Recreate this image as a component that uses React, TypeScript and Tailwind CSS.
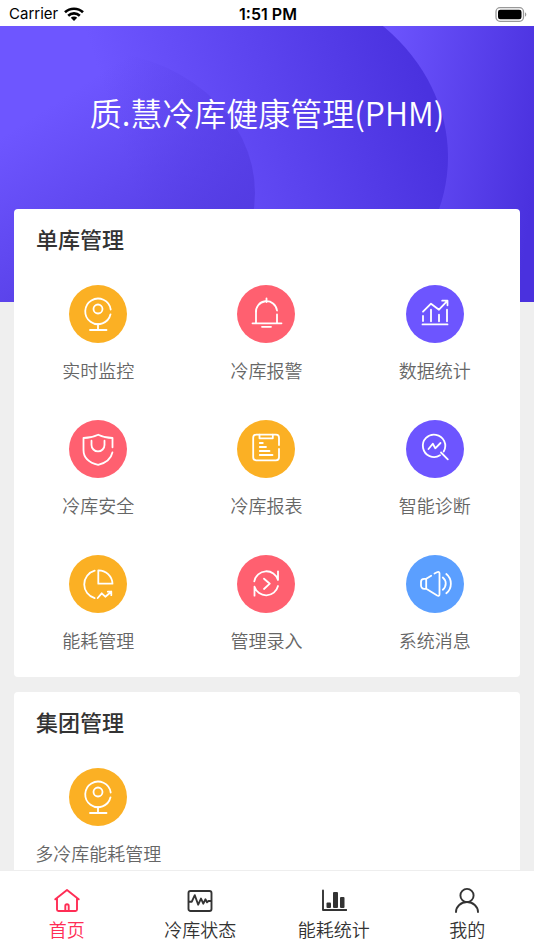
import { useState } from 'react';
import type { ReactNode } from 'react';

type MenuItem = {
  label: string;
  color: string;
  icon: ReactNode;
};

const webcam = (
  <>
    <path d="M41.700 24.500A12.800 12.800 0 1 0 41.500 29.300" />
    <circle cx="29" cy="24" r="4.500" />
    <path d="M29 39v6M21 45h16.500" />
  </>
);

const bell = (
  <>
    <path d="M29.500 13.500v3.500M19 38V28a10.500 10.500 0 0 1 21-2.500M40 29.500V38" />
    <path d="M15.500 38.300h29M25 41.800h9" />
  </>
);

const chart = (
  <>
    <path d="M16.500 39.400h25M17 31v5M25 24.700v11.600M33 29.700v6.600M41 24.700v11.600" />
    <path d="M17 26.700l8-8 8 6 8.300-8.800M36.200 15.700h5.300v4.600" />
  </>
);

const shield = (
  <>
    <path d="M43.500 27.300V18c-5 0-10-1.200-14.300-3.300C24.800 16.800 19.500 18 14.500 18v12c0 8 6 12.800 14.700 14.900C36.500 43 42 39 43.400 32.500" />
    <path d="M22.500 20.700v4.200a6.500 6.500 0 0 0 13 0v-4.200" />
  </>
);

const report = (
  <>
    <path d="M42 25v-7.300a3 3 0 0 0-3-3H19.200a3 3 0 0 0-3 3v19.600a3 3 0 0 0 3 3H39a3 3 0 0 0 3-3V29" />
    <path d="M22.500 14.700v3.600h13.300v-3.600M22.800 23h3M22.800 27h6.200M22.800 31h9.700M22.800 35h12.700" />
  </>
);

const diagnose = (
  <>
    <path d="M37.700 31.500A11.200 11.200 0 1 0 34 35.300" />
    <path d="M35 32.500l6.800 6.800M22.500 29l4.300-5.300 2.500 4.600 5.200-5.300" />
  </>
);

const pie = (
  <>
    <path d="M25.700 15.700a14.200 14.200 0 0 0 0 27.400" />
    <path d="M29.300 15.300v13.400h14.200A14 14 0 0 0 29.300 15.300zM28.700 43l4-4.700 3.600 3.400 6-5M38.800 36.700h3.500v3.500" />
  </>
);

const entry = (
  <>
    <path d="M17.300 26.300A12.200 12.200 0 0 1 41 25v-8.700M41 31a12.200 12.200 0 0 1-23.500.7v9" />
    <path d="M27 23.700l5.800 5L27 34" />
  </>
);

const speaker = (
  <>
    <path d="M20.200 23.800h-2a3.200 3.200 0 0 0-3.200 3.200v3.600a3.200 3.200 0 0 0 3.200 3.200h2zM20.200 23.800l5-3.100M28.500 18.500l2.500-1.300c1.500-.8 2.500 0 2.500 1.300v20.700c0 1.500-1 2-2.300 1.300l-11-6.700" />
    <path d="M36.800 22.500a7.800 7.800 0 0 1 0 12.200M40.300 19a12.500 12.500 0 0 1 0 19.300" />
  </>
);

const singleItems: MenuItem[] = [
  { label: '实时监控', color: 'bg-[#fbb024]', icon: webcam },
  { label: '冷库报警', color: 'bg-[#ff6070]', icon: bell },
  { label: '数据统计', color: 'bg-[#6d55ff]', icon: chart },
  { label: '冷库安全', color: 'bg-[#ff6070]', icon: shield },
  { label: '冷库报表', color: 'bg-[#fbb024]', icon: report },
  { label: '智能诊断', color: 'bg-[#6d55ff]', icon: diagnose },
  { label: '能耗管理', color: 'bg-[#fbb024]', icon: pie },
  { label: '管理录入', color: 'bg-[#ff6070]', icon: entry },
  { label: '系统消息', color: 'bg-[#5b9fff]', icon: speaker },
];

const groupItems: MenuItem[] = [{ label: '多冷库能耗管理', color: 'bg-[#fbb024]', icon: webcam }];

const tabs = [
  {
    label: '首页',
    icon: (
      <>
        <path d="M1.300 12.300L13 3l11.700 9.300M3 11v11.500a1.500 1.500 0 0 0 1.500 1.500h17a1.500 1.500 0 0 0 1.500-1.500V11" />
        <path d="M11.300 24v-5a1.700 1.700 0 0 1 3.400 0v5" />
      </>
    ),
  },
  {
    label: '冷库状态',
    icon: (
      <>
        <rect x="1.500" y="4" width="23" height="20" rx="2" />
        <path d="M2 14.700h2.800l3-6.500 3.400 9.500 2.800-6.100 2.300 5.100 2.100-4.400 1.600 3 1.500-1.300H24" />
      </>
    ),
  },
  {
    label: '能耗统计',
    icon: (
      <>
        <path d="M2 3.500V23h23.500" />
        <g fill="currentColor" stroke="none">
          <rect x="5.500" y="15.500" width="4.500" height="5.500" rx="1" />
          <rect x="12" y="5" width="5" height="16" rx="1" />
          <rect x="19" y="10" width="4.500" height="11" rx="1" />
        </g>
      </>
    ),
  },
  {
    label: '我的',
    icon: (
      <>
        <circle cx="13" cy="8.500" r="6.600" />
        <path d="M2 25a11 10 0 0 1 22 0" />
      </>
    ),
  },
];

function StatusBar() {
  return (
    <div className="grid h-[26px] shrink-0 grid-cols-3 items-center bg-white pt-0.5 pr-[7px] pl-[9px] font-['Inter',sans-serif] text-[15px] leading-6 font-normal text-black">
      <div className="flex items-center gap-1.5">
        <span>Carrier</span>
        <svg className="h-[14px] w-[20px]" viewBox="0 0 20 14" fill="none" stroke="currentColor" strokeWidth="2.600">
          <path d="M1 5.300a13 13 0 0 1 18 0M4.200 8.700a8.400 8.400 0 0 1 11.600 0" />
          <path d="M10 14l-3.200-3.200a4.600 4.600 0 0 1 6.400 0z" fill="currentColor" stroke="none" />
        </svg>
      </div>
      <div className="text-center text-base font-semibold">1:51 PM</div>
      <svg className="h-[15px] w-[32px] justify-self-end" viewBox="0 0 32 15">
        <rect x="1" y="0.700" width="27.500" height="13.600" rx="4" fill="none" stroke="#999" strokeWidth="1.300" />
        <rect x="3" y="2.700" width="23.500" height="9.600" rx="2.300" fill="#000" />
        <path d="M30 5.300c1.800.7 1.800 3.700 0 4.400z" fill="#999" />
      </svg>
    </div>
  );
}

function HeaderBackground() {
  return (
    <svg className="absolute inset-x-0 top-0 h-[276px] w-full" viewBox="0 0 534 276" preserveAspectRatio="none">
      <defs>
        <linearGradient id="base" gradientUnits="userSpaceOnUse" x1="370" y1="60" x2="545" y2="85">
          <stop offset="0" stopColor="#6e56ff" />
          <stop offset="1" stopColor="#4a31de" />
        </linearGradient>
        <linearGradient id="big" gradientUnits="userSpaceOnUse" x1="130" y1="150" x2="425" y2="60">
          <stop offset="0" stopColor="#6e56ff" />
          <stop offset="1" stopColor="#4a32df" />
        </linearGradient>
        <linearGradient id="small" gradientUnits="userSpaceOnUse" x1="80" y1="60" x2="190" y2="230">
          <stop offset="0" stopColor="#533be2" stopOpacity="0" />
          <stop offset="1" stopColor="#533be2" />
        </linearGradient>
      </defs>
      <rect width="534" height="276" fill="url(#base)" />
      <ellipse cx="232" cy="131" rx="216" ry="183" fill="url(#big)" />
      <ellipse cx="88" cy="167" rx="167" ry="142" fill="url(#small)" />
    </svg>
  );
}

function MenuCard({ title, items }: { title: string; items: MenuItem[] }) {
  return (
    <section className="rounded bg-white pb-[23px]">
      <h2 className="px-[22px] pt-3.5 pb-8 text-[22px] leading-[30px] font-medium text-[#333]">{title}</h2>
      <div className="grid grid-cols-3 gap-y-9 pr-px">
        {items.map((item) => (
          <button key={item.label} type="button" className="flex flex-col items-center gap-[13px]">
            <span className={`size-[58px] rounded-full ${item.color}`}>
              <svg
                viewBox="0 0 58 58"
                className="size-full text-white"
                fill="none"
                stroke="currentColor"
                strokeWidth="1.800"
                strokeLinecap="round"
                strokeLinejoin="round"
              >
                {item.icon}
              </svg>
            </span>
            <span className="text-lg leading-7 whitespace-nowrap text-[#666]">{item.label}</span>
          </button>
        ))}
      </div>
    </section>
  );
}

export default function App() {
  const [active, setActive] = useState('首页');

  return (
    <div className="flex h-screen flex-col bg-[#efefef] font-['Noto_Sans_CJK_SC',sans-serif] font-[350]">
      <StatusBar />

      <main className="relative min-h-0 flex-1 overflow-hidden">
        <HeaderBackground />
        <div className="relative">
          <h1 className="pt-[62px] pb-[73px] text-center text-[32px] leading-[48px] font-[350] text-white">
            质.慧冷库健康管理(PHM)
          </h1>
          <div className="flex flex-col gap-[15px] px-[14px]">
            <MenuCard title="单库管理" items={singleItems} />
            <MenuCard title="集团管理" items={groupItems} />
          </div>
        </div>
      </main>

      <nav className="relative grid h-20 shrink-0 grid-cols-4 border-t border-[#eee] bg-white">
        {tabs.map((tab) => (
          <button
            key={tab.label}
            type="button"
            onClick={() => setActive(tab.label)}
            className={`flex flex-col items-center gap-0.5 pt-4 ${active === tab.label ? 'text-[#ff2d55]' : 'text-[#333]'}`}
          >
            <svg
              viewBox="0 0 26 26"
              className="size-[26px]"
              fill="none"
              stroke="currentColor"
              strokeWidth="1.900"
              strokeLinecap="round"
              strokeLinejoin="round"
            >
              {tab.icon}
            </svg>
            <span className="text-lg leading-7">{tab.label}</span>
          </button>
        ))}
      </nav>
    </div>
  );
}
